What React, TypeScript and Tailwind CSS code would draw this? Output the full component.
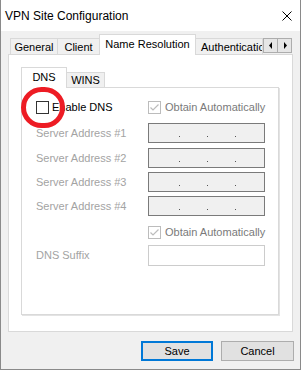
import React from "react";

function Check({ checked, disabled }: { checked?: boolean; disabled?: boolean }) {
  return (
    <div
      className={
        "w-[13px] h-[13px] border shrink-0 flex items-center justify-center " +
        (disabled ? "border-[#bcbcbc] bg-white" : "border-[#333333] bg-white")
      }
    >
      {checked && (
        <svg width="11" height="11" viewBox="0 0 11 11">
          <path d="M1.5 5.5 L4 8 L9.5 2.5" stroke="#bcbcbc" strokeWidth="1.2" fill="none" />
        </svg>
      )}
    </div>
  );
}

function IpField() {
  return (
    <div className="w-[117px] h-[20px] border border-[#7a7a7a] bg-[#f0f0f0] flex items-start pt-[12px] pl-[30px] gap-[27px]">
      <span className="w-[1px] h-[1px] bg-[#555555]" />
      <span className="w-[1px] h-[1px] bg-[#555555]" />
      <span className="w-[1px] h-[1px] bg-[#555555]" />
    </div>
  );
}

function AddrRow({ label, mt }: { label: string; mt: string }) {
  return (
    <div className={"flex items-center " + mt}>
      <div className="w-[112px] text-[#a3a3a3] leading-none">{label}</div>
      <IpField />
    </div>
  );
}

export default function App() {
  return (
    <div className="w-[304px] h-[371px] bg-white font-['Liberation_Sans',Arial,sans-serif] text-[11px] text-black">
      <div className="w-[301px] h-[370px] border-x border-b border-[#8a8a8a] flex flex-col">
        {/* title bar */}
        <div className="h-[31px] bg-white flex items-center justify-between pl-[4px] pr-[8px] shrink-0">
          <span className="text-[12px] leading-none">VPN Site Configuration</span>
          <svg width="10" height="10" viewBox="0 0 10 10">
            <path d="M0.5 0.5 L9.5 9.5 M9.5 0.5 L0.5 9.5" stroke="#000" strokeWidth="1" />
          </svg>
        </div>
        {/* body */}
        <div className="flex-1 bg-[#f0f0f0] pl-[7px] pt-[3px] flex flex-col">
          {/* outer tab strip */}
          <div className="flex h-[21px] items-end">
            <div className="ml-[2px] w-[48px] h-[17px] border-t border-x border-[#d9d9d9] bg-[#f0f0f0] flex items-center justify-center leading-none">
              General
            </div>
            <div className="-ml-[1px] w-[43px] h-[17px] border-t border-x border-[#d9d9d9] bg-[#f0f0f0] flex items-center justify-center leading-none">
              Client
            </div>
            <div className="relative z-10 -ml-[1px] w-[97px] h-[21px] border-t border-x border-[#d9d9d9] bg-white flex items-center justify-center leading-none pb-[2px]">
              Name Resolution
            </div>
            <div className="-ml-[1px] w-[68px] h-[17px] border-t border-x border-[#d9d9d9] bg-[#f0f0f0] flex items-center pl-[5px] leading-none overflow-hidden whitespace-nowrap">
              Authentication
            </div>
            <div className="flex self-start mt-[4px]">
              <div className="w-[15px] h-[15px] border border-[#adadad] bg-[#e6e6e6] flex items-center justify-center">
                <svg width="4" height="7" viewBox="0 0 4 7">
                  <path d="M3 0 L0 3.5 L3 7 Z" fill="#000" />
                </svg>
              </div>
              <div className="-ml-[1px] w-[15px] h-[15px] border border-[#adadad] bg-[#e6e6e6] flex items-center justify-center">
                <svg width="4" height="7" viewBox="0 0 4 7">
                  <path d="M1 0 L4 3.5 L1 7 Z" fill="#000" />
                </svg>
              </div>
            </div>
          </div>
          {/* outer page */}
          <div className="w-[285px] h-[278px] -mt-[1px] border border-[#d9d9d9] bg-white pl-[12px] pt-[12px] flex flex-col">
            {/* inner tab strip */}
            <div className="flex h-[21px] items-end">
              <div className="relative z-10 w-[46px] h-[21px] border-t border-x border-[#d9d9d9] bg-white flex items-center justify-center leading-none pb-[1px]">
                DNS
              </div>
              <div className="-ml-[1px] w-[39px] h-[16px] border-t border-x border-[#d9d9d9] bg-[#f0f0f0] flex items-center justify-center leading-none">
                WINS
              </div>
            </div>
            {/* inner page */}
            <div className="w-[258px] h-[228px] -mt-[1px] border border-[#d9d9d9] bg-white shadow-[1px_1px_0_#e3e3e3] pl-[14px] pt-[13px] flex flex-col">
              {/* row 1 */}
              <div className="flex items-center h-[13px]">
                <div className="w-[112px] flex items-center gap-[3px] relative">
                  <Check />
                  <span className="leading-none">Enable DNS</span>
                  <div className="absolute left-[-15px] top-[-14px] w-[44px] h-[41px] rounded-full border-[5px] border-[#ed1c24] z-10" />
                </div>
                <div className="flex items-center gap-[4px]">
                  <Check checked disabled />
                  <span className="leading-none text-[#7a7a7a]">Obtain Automatically</span>
                </div>
              </div>
              <AddrRow label="Server Address #1" mt="mt-[9px]" />
              <AddrRow label="Server Address #2" mt="mt-[5px]" />
              <AddrRow label="Server Address #3" mt="mt-[4px]" />
              <AddrRow label="Server Address #4" mt="mt-[4px]" />
              <div className="flex items-center h-[13px] mt-[10px]">
                <div className="w-[112px]" />
                <div className="flex items-center gap-[4px]">
                  <Check checked disabled />
                  <span className="leading-none text-[#7a7a7a]">Obtain Automatically</span>
                </div>
              </div>
              <div className="flex items-center mt-[6px]">
                <div className="w-[112px] text-[#a3a3a3] leading-none">DNS Suffix</div>
                <div className="w-[117px] h-[21px] border border-[#cccccc] bg-white" />
              </div>
            </div>
          </div>
          {/* buttons */}
          <div className="flex justify-end gap-[8px] pr-[6px] mt-[9px]">
            <div className="w-[72px] h-[20px] border-2 border-[#0078d7] bg-[#e1e1e1] flex items-center justify-center leading-none">
              Save
            </div>
            <div className="w-[73px] h-[20px] border border-[#adadad] bg-[#e1e1e1] flex items-center justify-center leading-none">
              Cancel
            </div>
          </div>
        </div>
      </div>
    </div>
  );
}
